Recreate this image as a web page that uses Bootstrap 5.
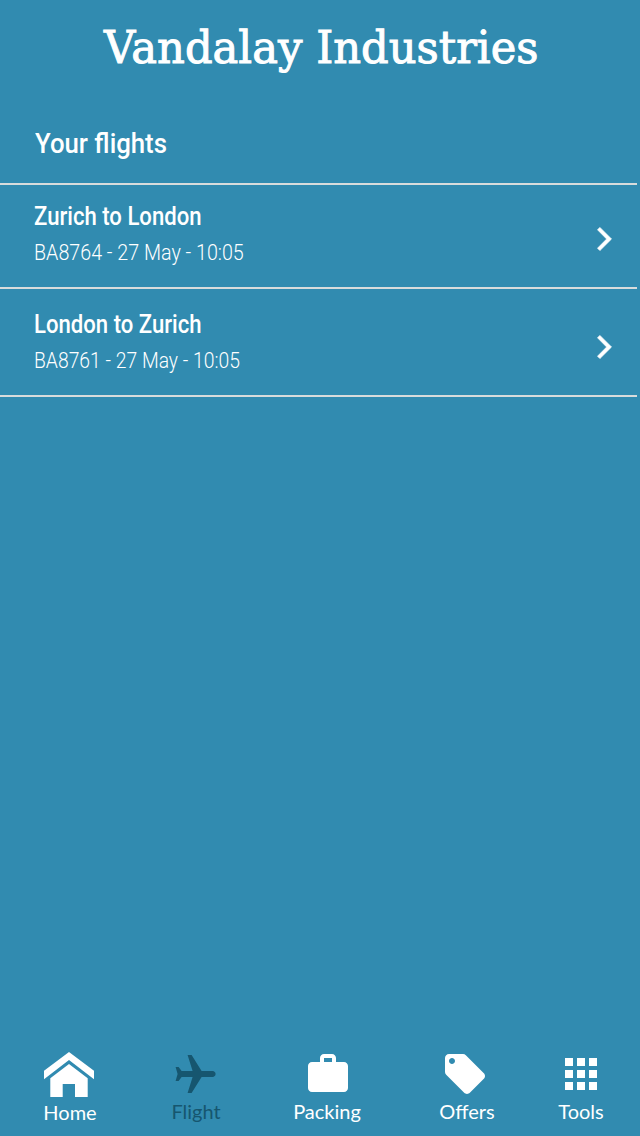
<!DOCTYPE html>
<html lang="en">
<head>
<meta charset="utf-8">
<meta name="viewport" content="width=device-width, initial-scale=1">
<title>Vandalay Industries</title>
<link rel="stylesheet" href="https://cdn.jsdelivr.net/npm/bootstrap@5.3.0/dist/css/bootstrap.min.css">
<style>
  body { background: #318bb0; font-family: Roboto, "Liberation Sans", sans-serif; }
  .brand { font: 400 45px/60px "DejaVu Serif", serif; padding: 18px 0 0 104px; -webkit-text-stroke: 1px #fff; }
  .squeeze { display: inline-block; transform-origin: 0 50%; white-space: nowrap; }
  .brand .squeeze { transform: scaleX(.961); }
  .section-title { font: 500 28px/36px Roboto, sans-serif; padding: 48px 0 21px 35px; }
  .section-title .squeeze { transform: scaleX(.92); }
  .flights { width: 637px; border-top: 2px solid #d8dcdc; }
  .flight { height: 104px; padding: 14px 25px 0 34px; border-bottom: 2px solid #d8dcdc; }
  .flight + .flight { height: 108px; padding-top: 18px; }
  .route { font: 500 25px/36px Roboto, sans-serif; }
  .route .squeeze { transform: scaleX(.885); }
  .detail { font: 300 22.5px/36px Roboto, sans-serif; margin-top: -1px; }
  .detail .squeeze { transform: scaleX(.875); }
  .flight + .flight .detail .squeeze { transform: scaleX(.859); }
  .chevron { width: 15px; height: 24px; margin-top: 28px; }
  .tabs { display: grid; grid-template-columns: 140px 112px 150px 130px 98px; height: 88px; }
  .tab { font: 400 20px/24px Lato, sans-serif; }
  .tab svg { height: 48px; margin: 2px 0 1px; }
  .tab:first-child svg { margin-bottom: 2px; }
  .tab.current { color: #16566f; }
</style>
</head>
<body class="text-white vh-100 d-flex flex-column overflow-hidden">
  <header class="brand"><span class="squeeze">Vandalay Industries</span></header>
  <main class="flex-grow-1">
    <h1 class="section-title m-0"><span class="squeeze">Your flights</span></h1>
    <div class="flights">
      <a href="#" class="flight d-flex align-items-start justify-content-between text-white text-decoration-none">
        <div>
          <div class="route"><span class="squeeze">Zurich to London</span></div>
          <div class="detail"><span class="squeeze">BA8764 - 27 May - 10:05</span></div>
        </div>
        <svg class="chevron" viewBox="8.55 6 7.5 12" fill="currentColor" stroke="currentColor" stroke-width=".35" stroke-linejoin="round"><path d="M10 6.2L8.8 7.41 13.37 12l-4.57 4.59L10 17.8l5.8-5.8z"/></svg>
      </a>
      <a href="#" class="flight d-flex align-items-start justify-content-between text-white text-decoration-none">
        <div>
          <div class="route"><span class="squeeze">London to Zurich</span></div>
          <div class="detail"><span class="squeeze">BA8761 - 27 May - 10:05</span></div>
        </div>
        <svg class="chevron" viewBox="8.55 6 7.5 12" fill="currentColor" stroke="currentColor" stroke-width=".35" stroke-linejoin="round"><path d="M10 6.2L8.8 7.41 13.37 12l-4.57 4.59L10 17.8l5.8-5.8z"/></svg>
      </a>
    </div>
  </main>
  <nav class="tabs">
    <div class="tab d-flex flex-column align-items-center">
      <svg width="52" viewBox="44 1050 52 48" fill="currentColor"><path d="M69 1052l25 18.8v8.4l-25-19.2-25 19.2v-8.4zM69 1064l18.7 14.2V1097H75v-13H62.7v13H50.3v-18.8z"/></svg>
      <span>Home</span>
    </div>
    <div class="tab current d-flex flex-column align-items-center">
      <svg width="48" viewBox="0.2 -0.5 24 24" fill="currentColor"><path transform="rotate(90 12 12)" d="M21 16v-2l-8-5V3.5c0-.83-.67-1.5-1.5-1.5S10 2.67 10 3.5V9l-8 5v2l8-2.5V19l-2 1.5V22l3.5-1 3.5 1v-1.5L13 19v-5.5z"/></svg>
      <span>Flight</span>
    </div>
    <div class="tab d-flex flex-column align-items-center">
      <svg width="50" viewBox="-1 0 25 24" fill="currentColor"><path d="M20 6h-4V4c0-1.11-.89-2-2-2h-4c-1.11 0-2 .89-2 2v2H4c-1.11 0-2 .89-2 2v11c0 1.11.89 2 2 2h16c1.11 0 2-.89 2-2V8c0-1.11-.89-2-2-2zm-6 0h-4V4h4z"/></svg>
      <span>Packing</span>
    </div>
    <div class="tab d-flex flex-column align-items-center">
      <svg width="52" viewBox="0 0 26 24" fill="currentColor"><path d="M21.41 11.58l-9-9C12.05 2.22 11.55 2 11 2H4c-1.1 0-2 .9-2 2v7c0 .55.22 1.05.59 1.42l9 9c.36.36.86.58 1.41.58.55 0 1.05-.22 1.41-.59l7-7c.37-.36.59-.86.59-1.41 0-.55-.23-1.06-.59-1.42zM5.5 7C4.67 7 4 6.33 4 5.5S4.67 4 5.5 4 7 4.67 7 5.5 6.33 7 5.5 7z"/></svg>
      <span>Offers</span>
    </div>
    <div class="tab d-flex flex-column align-items-center">
      <svg width="48" viewBox="0 0 24 24" fill="currentColor"><path d="M4 8h4V4H4zm6 12h4v-4h-4zm-6 0h4v-4H4zm0-6h4v-4H4zm6 0h4v-4h-4zm6-10v4h4V4zm-6 4h4V4h-4zm6 6h4v-4h-4zm0 6h4v-4h-4z"/></svg>
      <span>Tools</span>
    </div>
  </nav>
<script src="https://cdn.jsdelivr.net/npm/bootstrap@5.3.0/dist/js/bootstrap.bundle.min.js"></script>
</body>
</html>
